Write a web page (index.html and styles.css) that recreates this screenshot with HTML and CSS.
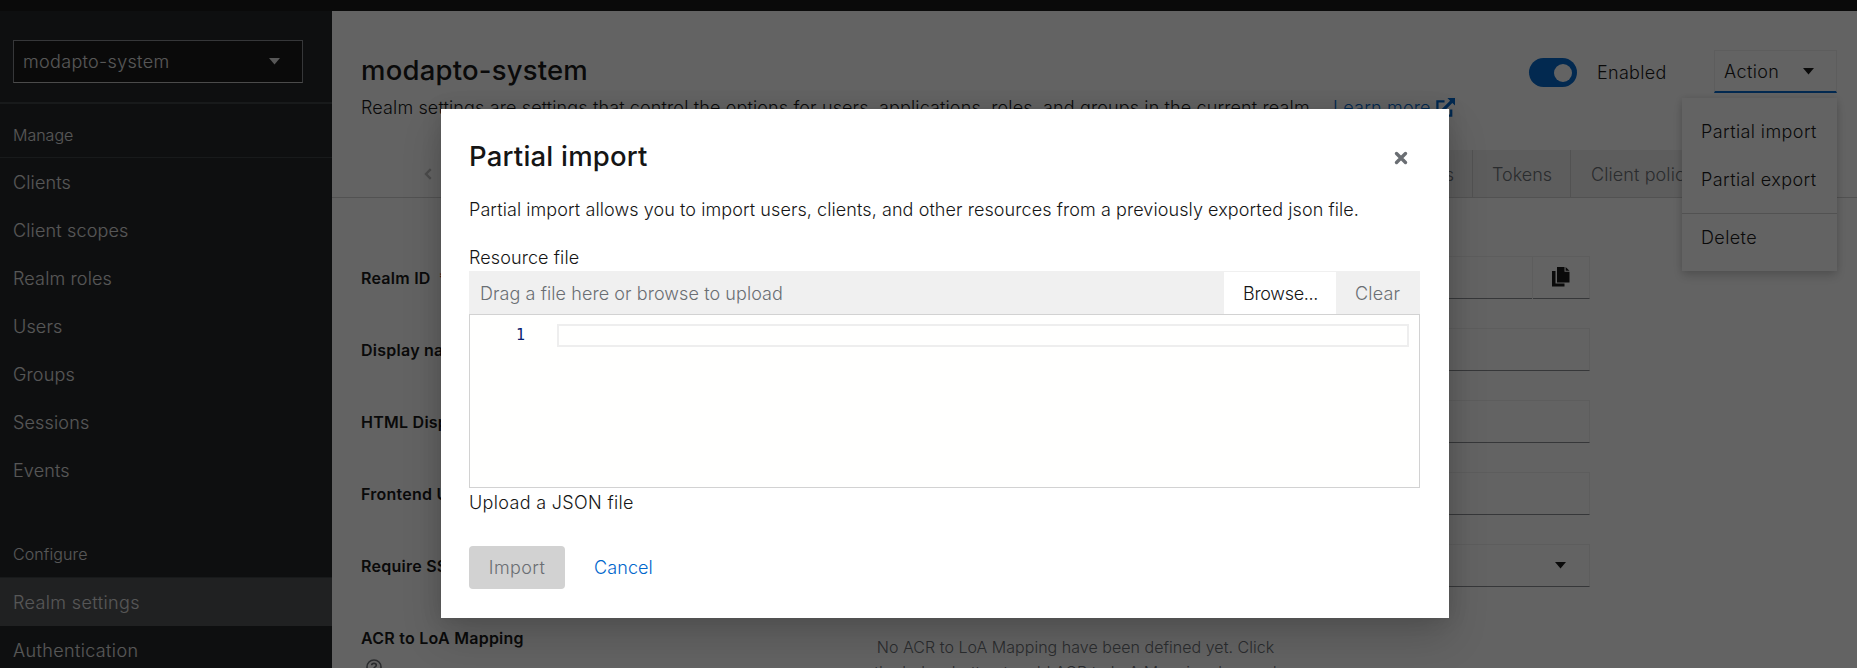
FILE: index.html
```html
<!DOCTYPE html>
<html lang="en">
<head>
<meta charset="utf-8">
<title>Realm settings</title>
<link rel="stylesheet" href="styles.css">
</head>
<body>
<div class="page">
  <header class="masthead"></header>
  <div class="body">
    <nav class="sidebar">
      <div class="realm-wrap">
        <div class="realm-select"><span>modapto-system</span><svg class="caret" viewBox="0 0 11 7"><path d="M0 0h11L5.500 6.500z"/></svg></div>
      </div>
      <h2 class="nav-title">Manage</h2>
      <a class="nav-item">Clients</a>
      <a class="nav-item">Client scopes</a>
      <a class="nav-item">Realm roles</a>
      <a class="nav-item">Users</a>
      <a class="nav-item">Groups</a>
      <a class="nav-item">Sessions</a>
      <a class="nav-item">Events</a>
      <h2 class="nav-title second">Configure</h2>
      <a class="nav-item wide current">Realm settings</a>
      <a class="nav-item wide">Authentication</a>
    </nav>
    <main class="main">
      <div class="head">
        <div class="head-text">
          <h1 class="title">modapto-system</h1>
          <p class="desc"><span>Realm settings are settings that control the options for users, applications, roles, and groups in the current realm.</span><a class="learn">Learn more <svg class="ext" viewBox="0 0 20 20"><path d="M9 3.500H1.500v15H16V12" fill="none" stroke="currentColor" stroke-width="2.400"/><path d="M12 0h8v8l-2.800-2.800-9 9-2.400-2.400 9-9z" fill="currentColor"/></svg></a></p>
        </div>
        <div class="head-actions">
          <span class="switch"><i></i></span>
          <span class="enabled">Enabled</span>
          <div class="action"><span>Action</span><svg class="caret" viewBox="0 0 11 7"><path d="M0 0h11L5.500 6.500z"/></svg>
            <div class="menu">
              <a>Partial import</a><a>Partial export</a><hr><a>Delete</a>
            </div>
          </div>
        </div>
      </div>
      <div class="tabs">
        <svg class="chev" viewBox="0 0 8 12"><path d="M6.800 1.200L2 6l4.800 4.800" fill="none" stroke="currentColor" stroke-width="2.400"/></svg>
        <div class="tab-list"><span class="tab">Sessions</span><span class="tab">Tokens</span><span class="tab">Client policies</span></div>
      </div>
      <div class="form">
        <div class="row"><label>Realm ID <b class="req">*</b></label><div class="field"><span class="copy"><svg viewBox="0 0 18 20"><path d="M0 4h3.500v12.500H12.500V19.500H0z"/><path d="M5 0h7.500v4.800H17.500V15.500H5z"/><path d="M13.600 0L17.500 3.800H13.600z"/></svg></span></div></div>
        <div class="row"><label>Display name</label><div class="field"></div></div>
        <div class="row"><label>HTML Display name</label><div class="field"></div></div>
        <div class="row"><label>Frontend URL</label><div class="field"></div></div>
        <div class="row"><label>Require SSL</label><div class="field select"><svg class="caret" viewBox="0 0 11 7"><path d="M0 0h11L5.500 6.500z"/></svg></div></div>
        <div class="row"><label>ACR to LoA Mapping<svg class="help" viewBox="0 0 16 16"><circle cx="8" cy="8" r="7" fill="none" stroke="currentColor" stroke-width="1.600"/><path d="M5.700 6.300C5.800 3.600 10.300 3.700 10.300 6.300 10.300 7.900 8 7.800 8 9.400M8 10.700v1.500" fill="none" stroke="currentColor" stroke-width="1.700"/></svg></label>
          <p class="empty">No ACR to LoA Mapping have been defined yet. Click<br>the below button to add ACR to LoA Mapping, key and</p></div>
      </div>
    </main>
  </div>
  <div class="backdrop">
    <section class="modal">
      <header class="modal-head"><h1>Partial import</h1><svg class="close" viewBox="0 0 14 14"><path d="M2.500 2.500l9 9M11.500 2.500l-9 9" stroke="#6a6e73" stroke-width="3.400" stroke-linecap="round"/></svg></header>
      <p class="intro">Partial import allows you to import users, clients, and other resources from a previously exported json file.</p>
      <div class="resource">Resource file</div>
      <div class="upload"><span class="drop">Drag a file here or browse to upload</span><span class="browse">Browse...</span><span class="clear">Clear</span></div>
      <div class="editor"><span class="line-no">1</span><span class="line"></span></div>
      <div class="hint">Upload a JSON file</div>
      <footer class="modal-foot"><button class="import">Import</button><a class="cancel">Cancel</a></footer>
    </section>
  </div>
</div>
</body>
</html>
```
FILE: styles.css
```css
* { box-sizing: border-box; }
body { margin: 0; font: 300 18px/28px Inter, "Open Sans", sans-serif; color: #151515; }
h1, h2, p { margin: 0; font-weight: 300; }
.page { position: relative; height: 668px; overflow: hidden; background: #fff; white-space: nowrap; }
.masthead { height: 11px; background: #151515; }
.body { display: flex; height: 657px; }
.caret { width: 11px; height: 7px; fill: currentColor; }

.sidebar { width: 332px; flex: none; background: #212427; color: #e0e0e0; overflow: hidden; }
.realm-wrap { height: 93px; padding: 29px 29px 0 13px; border-bottom: 2px solid #3c3f42; }
.realm-select { display: flex; align-items: center; justify-content: space-between; height: 43px; padding: 0 22px 0 9px; background: #151515; border: 1px solid #8a8d90; border-bottom-color: #c0c0c0; letter-spacing: .32px; }
.nav-title { height: 54px; padding: 17px 13px 0; border-bottom: 1px solid #3c3f42; font-size: 16px; line-height: 28px; }
.nav-title.second { height: 84px; padding-top: 46px; letter-spacing: .1px; }
.nav-item { display: block; height: 48px; padding-left: 13px; line-height: 50px; letter-spacing: .15px; }
.nav-item.wide { letter-spacing: .37px; }
.current { background: #4f5255; }

.main { flex: 1; min-width: 0; }
.head { display: flex; justify-content: space-between; height: 139px; padding: 38px 20px 0 29px; }
.title { font-size: 27.500px; line-height: 42px; font-weight: 450; letter-spacing: .2px; }
.desc { line-height: 33px; letter-spacing: .13px; }
.learn { color: #06c; margin-left: 18px; letter-spacing: .18px; }
.ext { width: 19px; height: 19px; vertical-align: -3px; }
.head-actions { display: flex; align-items: flex-start; padding-top: 1px; }
.switch { width: 48px; height: 29px; margin: 8px 20px 0 0; padding: 6px 5px 0 25px; border-radius: 15px; background: #06c; }
.switch i { display: block; width: 18px; height: 18px; border-radius: 50%; background: #fff; }
.enabled { width: 117px; line-height: 45px; letter-spacing: .3px; }
.action { position: relative; display: flex; align-items: center; justify-content: space-between; width: 123px; height: 43px; padding: 1px 22px 0 9px; border: 1px solid #f0f0f0; border-bottom: 2px solid #06c; letter-spacing: .4px; }
.menu { position: absolute; z-index: 2; top: 47px; right: -1px; width: 155px; height: 173px; padding-top: 10px; background: #fff; box-shadow: 0 5px 10px rgba(3,3,3,.16), 0 0 7px rgba(3,3,3,.1); }
.menu a { display: block; height: 48px; padding-left: 19px; line-height: 48px; }
.menu hr { height: 1px; margin: 9px 0 0; border: 0; background: #d2d2d2; }
.tabs { display: flex; align-items: center; height: 48px; padding-left: 92px; border-bottom: 1px solid #d2d2d2; color: #6a6e73; }
.chev { width: 8px; height: 12px; color: #c0c0c0; }
.tab-list { display: flex; width: 380px; margin-left: 930px; overflow: hidden; }
.tab { height: 47px; padding: 0 19px; background: #f0f0f0; border-right: 1px solid #d2d2d2; line-height: 49px; }
.tab:first-child { width: 111px; display: flex; justify-content: flex-end; padding-right: 18px; }
.tab:nth-child(2) { width: 98px; }
.tab:last-child { width: 171px; padding-left: 20px; border: 0; letter-spacing: .1px; }

.form { padding: 58px 0 0 29px; }
.row { display: flex; height: 72px; }
.row label { width: 500px; padding-top: 8px; font-size: 16px; line-height: 28px; font-weight: 600; letter-spacing: .25px; }
.req { color: #c9190b; margin-left: 4px; font-weight: 400; }
.field { width: 729px; height: 43px; border: 1px solid #f0f0f0; border-bottom-color: #8a8d90; }
.copy { display: flex; align-items: center; justify-content: center; width: 57px; height: 42px; margin-left: auto; padding: 0 0 3px; border-left: 1px solid #f0f0f0; }
.copy svg { width: 18px; height: 20px; fill: #151515; }
.select { display: flex; align-items: center; justify-content: flex-end; padding-right: 23px; }
.help { display: block; width: 16px; height: 16px; margin: 7px 0 0 5px; color: #6a6e73; }
.empty { width: 429px; padding-top: 19px; text-align: center; font-size: 16px; line-height: 25px; color: #6a6e73; letter-spacing: .03px; }

.backdrop { position: absolute; inset: 0; z-index: 10; display: flex; padding: 109px 0 0 441px; background: rgba(3,3,3,.62); }
.modal { width: 1008px; height: 509px; padding: 28px 29px 0 28px; background: #fff; box-shadow: 0 19px 38px rgba(3,3,3,.16), 0 0 19px rgba(3,3,3,.12); }
.modal-head { display: flex; justify-content: space-between; height: 57px; padding-right: 12px; }
.modal-head h1 { font-size: 27.500px; line-height: 38px; font-weight: 450; letter-spacing: .2px; }
.close { width: 14px; height: 14px; margin-top: 14px; }
.intro { height: 49px; line-height: 32px; letter-spacing: .08px; }
.resource { height: 28px; line-height: 30px; letter-spacing: .1px; }
.upload { display: flex; height: 43px; background: #f0f0f0; line-height: 45px; color: #6a6e73; }
.drop { flex: 1; padding-left: 11px; letter-spacing: .08px; }
.browse { width: 112px; height: 42px; margin-top: 1px; padding-left: 19px; background: #fff; color: #151515; line-height: 43px; letter-spacing: -.3px; }
.clear { width: 84px; padding-left: 19px; letter-spacing: .2px; }
.editor { display: flex; height: 174px; padding: 9px 10px 0 46px; border: 1px solid #d2d2d2; background: #fffffe; }
.line-no { width: 41px; font: 400 15px/22px "DejaVu Sans Mono", monospace; color: #0b216f; }
.line { flex: 1; height: 23px; border: 2px solid #eee; }
.hint { line-height: 29px; letter-spacing: .33px; }
.modal-foot { display: flex; gap: 29px; margin-top: 29px; align-items: center; }
.import { width: 96px; height: 43px; border: 0; border-radius: 4px; background: #d2d2d2; color: #6a6e73; font: inherit; letter-spacing: .4px; padding: 0; }
.cancel { color: #06c; letter-spacing: .1px; }
```
